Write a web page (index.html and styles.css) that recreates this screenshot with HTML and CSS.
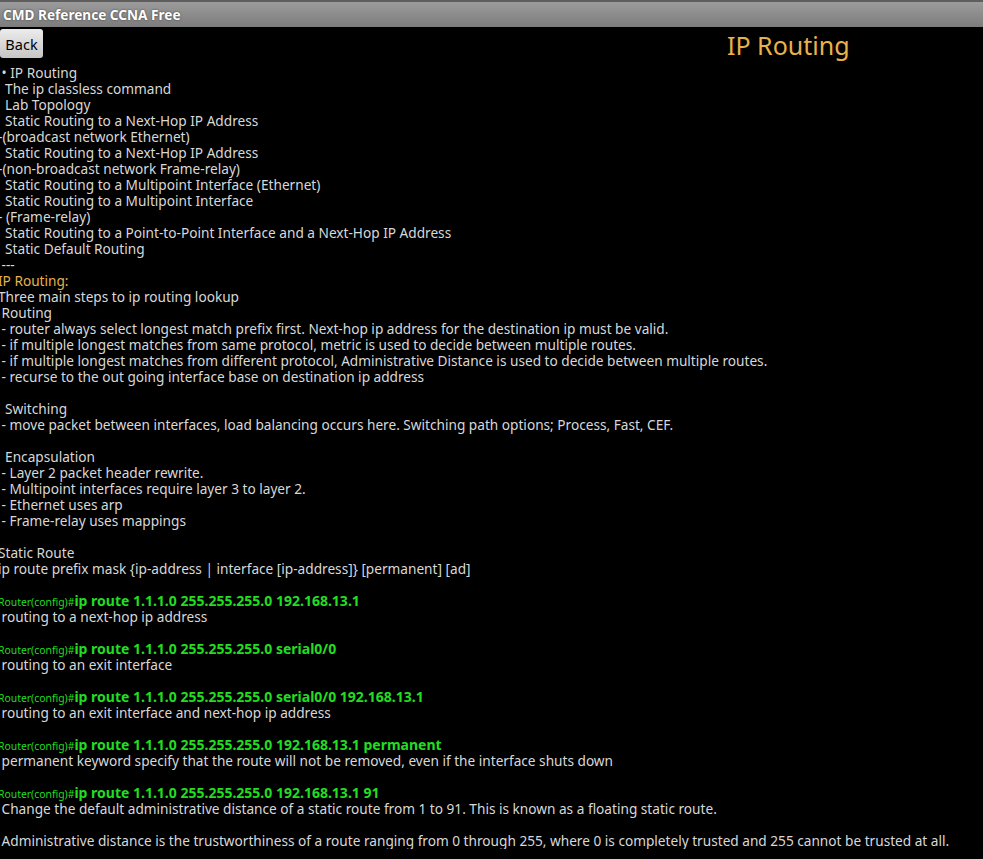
FILE: index.html
```html
<!DOCTYPE html>
<html lang="en">
<head>
    <meta charset="UTF-8">
    <meta name="viewport" content="width=device-width, initial-scale=1.0">
    <title>CMD Reference CCNA Free</title>
    <link rel="stylesheet" href="styles.css">
</head>
<body>

    <div class="titlebar">CMD Reference CCNA Free</div>

    <div class="toolbar">
        <button class="back-btn">Back</button>
        <div class="heading">IP Routing</div>
    </div>

    <div class="content">
<div class="line"> • IP Routing</div>
<div class="line">  The ip classless command</div>
<div class="line">  Lab Topology</div>
<div class="line">  Static Routing to a Next-Hop IP Address</div>
<div class="line">-(broadcast network Ethernet)</div>
<div class="line">  Static Routing to a Next-Hop IP Address</div>
<div class="line">-(non-broadcast network Frame-relay)</div>
<div class="line">  Static Routing to a Multipoint Interface (Ethernet)</div>
<div class="line">  Static Routing to a Multipoint Interface</div>
<div class="line">- (Frame-relay)</div>
<div class="line">  Static Routing to a Point-to-Point Interface and a Next-Hop IP Address</div>
<div class="line">  Static Default Routing</div>
<div class="line"> ---</div>
<div class="line section">IP Routing:</div>
<div class="line">Three main steps to ip routing lookup</div>
<div class="line"> Routing</div>
<div class="line"> - router always select longest match prefix first. Next-hop ip address for the destination ip must be valid.</div>
<div class="line"> - if multiple longest matches from same protocol, metric is used to decide between multiple routes.</div>
<div class="line"> - if multiple longest matches from different protocol, Administrative Distance is used to decide between multiple routes.</div>
<div class="line"> - recurse to the out going interface base on destination ip address</div>
<div class="line"> </div>
<div class="line">  Switching</div>
<div class="line"> - move packet between interfaces, load balancing occurs here. Switching path options; Process, Fast, CEF.</div>
<div class="line"> </div>
<div class="line">  Encapsulation</div>
<div class="line"> - Layer 2 packet header rewrite.</div>
<div class="line"> - Multipoint interfaces require layer 3 to layer 2.</div>
<div class="line"> - Ethernet uses arp</div>
<div class="line"> - Frame-relay uses mappings</div>
<div class="line"> </div>
<div class="line">Static Route</div>
<div class="line">ip route prefix mask {ip-address | interface [ip-address]} [permanent] [ad]</div>
<div class="line"> </div>
<div class="line cmd"><span class="prompt">Router(config)#</span>ip route 1.1.1.0 255.255.255.0 192.168.13.1</div>
<div class="line"> routing to a next-hop ip address</div>
<div class="line"> </div>
<div class="line cmd"><span class="prompt">Router(config)#</span>ip route 1.1.1.0 255.255.255.0 serial0/0</div>
<div class="line"> routing to an exit interface</div>
<div class="line"> </div>
<div class="line cmd"><span class="prompt">Router(config)#</span>ip route 1.1.1.0 255.255.255.0 serial0/0 192.168.13.1</div>
<div class="line"> routing to an exit interface and next-hop ip address</div>
<div class="line"> </div>
<div class="line cmd"><span class="prompt">Router(config)#</span>ip route 1.1.1.0 255.255.255.0 192.168.13.1 permanent</div>
<div class="line"> permanent keyword specify that the route will not be removed, even if the interface shuts down</div>
<div class="line"> </div>
<div class="line cmd"><span class="prompt">Router(config)#</span>ip route 1.1.1.0 255.255.255.0 192.168.13.1 91</div>
<div class="line"> Change the default administrative distance of a static route from 1 to 91. This is known as a floating static route.</div>
<div class="line"> </div>
<div class="line"> Administrative distance is the trustworthiness of a route ranging from 0 through 255, where 0 is completely trusted and 255 cannot be trusted at all.</div>
    </div>

</body>
</html>
```

FILE: styles.css
```css
body {
    background: #000;
    color: #d8d8d8;
    font-family: "Noto Sans", "Open Sans", sans-serif;
    font-size: 13.65px;
    margin: 0;
    padding: 0;
    overflow: hidden;
}

.titlebar {
    height: 25px;
    line-height: 25px;
    border-top: 2px solid #5e5e5e;
    background: linear-gradient(#9c9c9c, #7c7c7c);
    color: #fff;
    font-weight: bold;
    font-size: 13.6px;
    padding-left: 3px;
    text-shadow: 0 0 2px #333;
}

.toolbar {
    display: flex;
    align-items: center;
    margin-top: 2px;
    height: 29px;
}

.back-btn {
    width: 43px;
    height: 29px;
    padding: 0;
    border: none;
    border-radius: 3px;
    background: linear-gradient(#ececec, #c6c6c6);
    color: #000;
    font-family: "Noto Sans", "Open Sans", sans-serif;
    font-size: 14.5px;
    cursor: pointer;
}

.heading {
    margin-left: 684px;
    padding-top: 3px;
    color: #e9b14c;
    font-size: 25px;
    line-height: 29px;
}

.content {
    margin-top: 7px;
    margin-left: -2px;
}

.line {
    white-space: pre;
    height: 16px;
    line-height: 16px;
}

.section {
    color: #e9b14c;
}

.cmd {
    color: #22dd22;
    font-weight: bold;
    font-size: 14px;
}

.prompt {
    font-size: 10.4px;
    font-weight: normal;
}
```
